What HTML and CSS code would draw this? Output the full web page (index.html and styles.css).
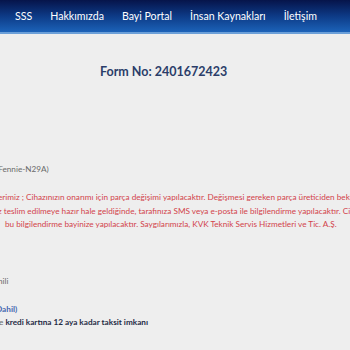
FILE: index.html
```html
<!DOCTYPE html>
<html lang="tr">
<head>
<meta charset="utf-8">
<title>Form</title>
<link rel="stylesheet" href="styles.css">
</head>
<body>
<header class="topbar">
  <nav class="nav">
    <a class="nav-item">SSS</a>
    <a class="nav-item">Hakkımızda</a>
    <a class="nav-item">Bayi Portal</a>
    <a class="nav-item">İnsan Kaynakları</a>
    <a class="nav-item">İletişim</a>
  </nav>
</header>
<main class="page">
  <h1 class="form-no">Form No: 2401672423</h1>
  <div class="details">
    <div class="line gray model">(Fennie-N29A)</div>
    <div class="notice">
      <div class="line red l1">erimiz ; Cihazınızın onarımı için parça değişimi yapılacaktır. Değişmesi gereken parça üreticiden beklenmektedir.</div>
      <div class="line red l2">z teslim edilmeye hazır hale geldiğinde, tarafınıza SMS veya e-posta ile bilgilendirme yapılacaktır. Cihazınızı</div>
      <div class="line red l3">bu bilgilendirme bayinize yapılacaktır. Saygılarımızla, KVK Teknik Servis Hizmetleri ve Tic. A.Ş.</div>
    </div>
    <div class="line gray warranty">hili</div>
    <div class="line blue price">Dahil)</div>
    <div class="line taksit"><span class="gray">e</span> <span class="strong">kredi kartına 12 aya kadar taksit imkanı</span></div>
  </div>
</main>
</body>
</html>
```
FILE: styles.css
```css
html, body {
  margin: 0;
  padding: 0;
}
body {
  width: 350px;
  height: 350px;
  overflow: hidden;
  background: #eeeeee;
  font-family: Lato, "Open Sans", sans-serif;
}
.topbar {
  height: 32px;
  background: linear-gradient(to bottom, #06144a 0%, #0d3a86 50%, #1c62b8 100%);
  border-bottom: 2px solid #6b9fd8;
}
.nav {
  display: flex;
  align-items: center;
  height: 33px;
  padding-left: 15px;
  gap: 18px;
}
.nav-item {
  color: #ffffff;
  font-size: 10.6px;
  line-height: 1;
}
.page {
  padding-top: 31px;
}
.form-no {
  margin: 0;
  padding-left: 100px;
  font-size: 12.5px;
  font-weight: 700;
  line-height: 14px;
  color: #2b3d69;
}
.details {
  padding-top: 84px;
}
.line {
  white-space: nowrap;
  font-size: 8.2px;
  line-height: 13px;
}
.gray { color: #6a6a6a; }
.red { color: #d2434b; line-height: 13.5px; }
.blue { color: #4468b0; font-weight: 700; }
.strong { color: #1f2b45; font-weight: 700; }
.model { text-indent: -4px; }
.notice { padding-top: 15px; }
.l1 { text-indent: -2px; }
.l2 { text-indent: -2px; }
.l3 { text-indent: 5px; }
.warranty { padding-top: 43px; text-indent: -2px; }
.price { padding-top: 15px; text-indent: -4px; }
.taksit { text-indent: -1px; }
```
